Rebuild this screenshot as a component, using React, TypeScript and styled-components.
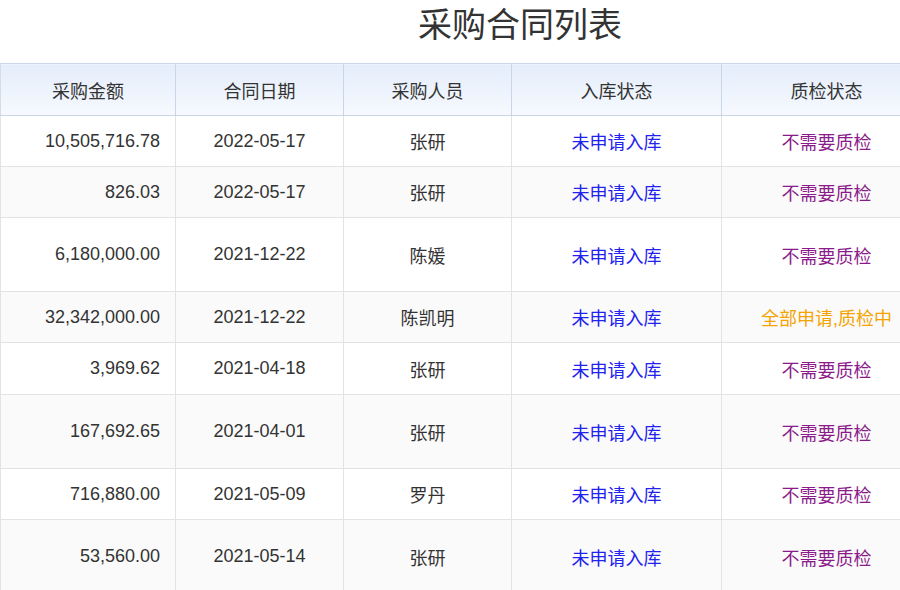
import React from "react"
import styled, { createGlobalStyle } from "styled-components"

const Global = createGlobalStyle`
	body { margin: 0; background: #fff; font-family: "Liberation Sans", "Noto Sans CJK SC", sans-serif; overflow: hidden; }
`

const Page = styled.div`
	width: 900px;
	overflow: hidden;
`

const Title = styled.h1`
	margin: 0;
	height: 63px;
	width: 1040px;
	box-sizing: border-box;
	padding-top: 4px;
	display: flex;
	align-items: flex-start;
	justify-content: center;
	font-size: 34px;
	line-height: 42px;
	font-weight: normal;
	color: #333;
`

const Table = styled.table`
	border-collapse: collapse;
	width: 928px;
	table-layout: fixed;
	font-size: 18px;
	color: #333;
`

const Th = styled.th<{ $w: number }>`
	width: ${p => p.$w}px;
	height: 51px;
	padding: 0;
	font-weight: normal;
	background: linear-gradient(#e4edfb, #f6f9fe);
	border: 1px solid #c9d6e8;
	border-left-color: #d2dde9;
`

const Row = styled.tr<{ $h: number; $alt: boolean }>`
	height: ${p => p.$h}px;
	background: ${p => (p.$alt ? "#fafafa" : "#fff")};
`

const Td = styled.td<{ $align?: string; $color?: string }>`
	border: 1px solid #e3e3e3;
	padding: 0 15px;
	text-align: ${p => p.$align || "center"};
	color: ${p => p.$color || "#333"};
	white-space: nowrap;
`

const rows = [
	["10,505,716.78", "2022-05-17", "张研", "不需要质检", 51],
	["826.03", "2022-05-17", "张研", "不需要质检", 51],
	["6,180,000.00", "2021-12-22", "陈媛", "不需要质检", 74],
	["32,342,000.00", "2021-12-22", "陈凯明", "全部申请,质检中", 51],
	["3,969.62", "2021-04-18", "张研", "不需要质检", 52],
	["167,692.65", "2021-04-01", "张研", "不需要质检", 74],
	["716,880.00", "2021-05-09", "罗丹", "不需要质检", 51],
	["53,560.00", "2021-05-14", "张研", "不需要质检", 74],
] as const

export default function App() {
	return (
		<Page>
			<Global />
			<Title>采购合同列表</Title>
			<Table>
				<thead>
					<tr>
						<Th $w={174}>采购金额</Th>
						<Th $w={167}>合同日期</Th>
						<Th $w={167}>采购人员</Th>
						<Th $w={209}>入库状态</Th>
						<Th $w={209}>质检状态</Th>
					</tr>
				</thead>
				<tbody>
					{rows.map((r, i) => (
						<Row key={i} $h={r[4]} $alt={i % 2 === 1}>
							<Td $align="right">{r[0]}</Td>
							<Td>{r[1]}</Td>
							<Td>{r[2]}</Td>
							<Td $color="#2222ee">未申请入库</Td>
							<Td $color={r[3] === "不需要质检" ? "#8b1a8b" : "#f5a300"}>{r[3]}</Td>
						</Row>
					))}
				</tbody>
			</Table>
		</Page>
	)
}
